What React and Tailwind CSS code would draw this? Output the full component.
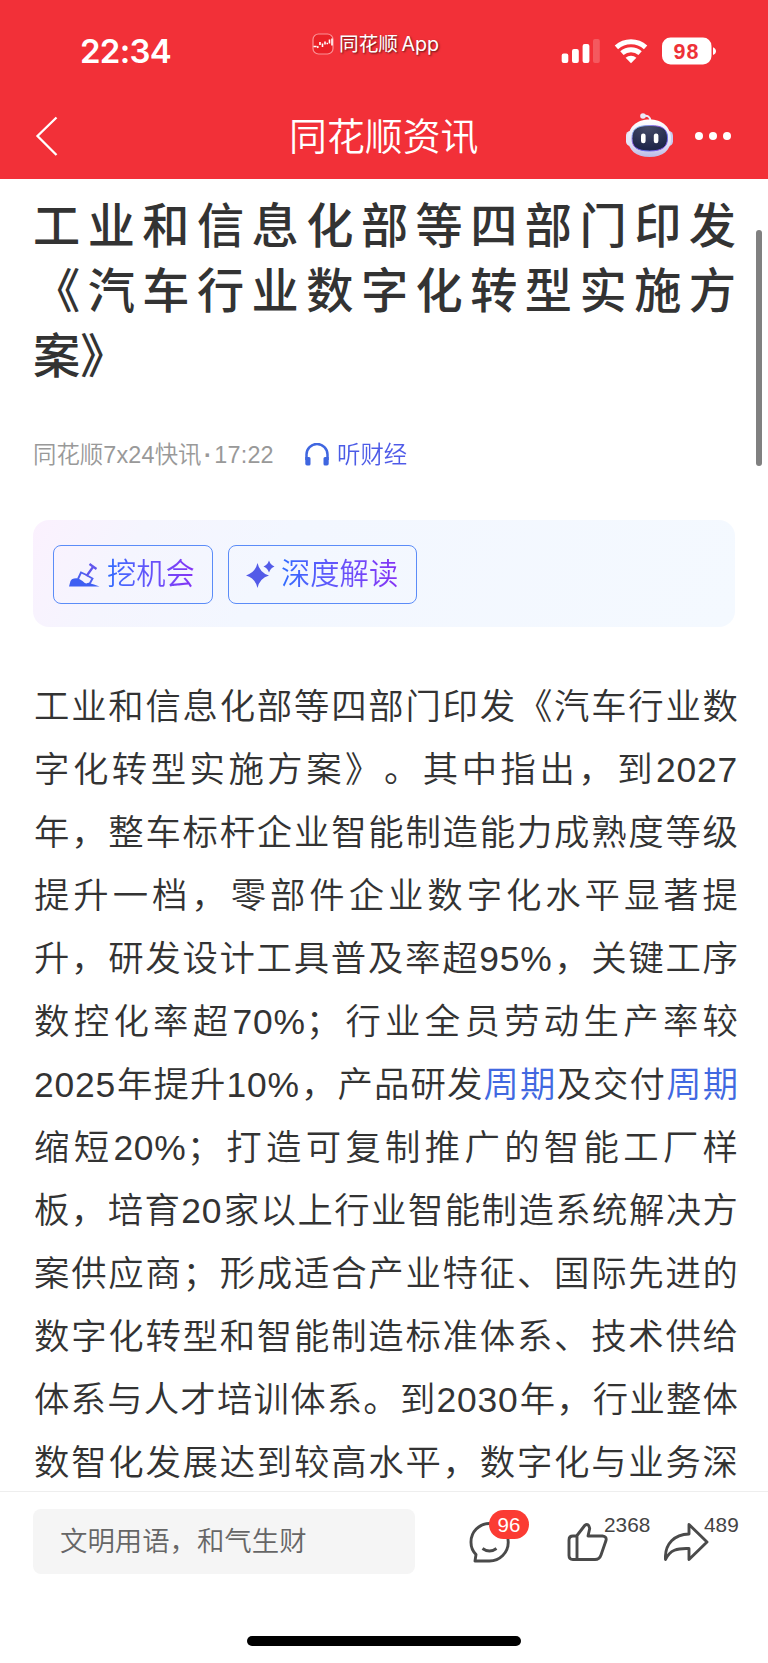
import React from "react";

const titleLines = ["工业和信息化部等四部门印发", "《汽车行业数字化转型实施方", "案》"];

const bodyLines = [
  "工业和信息化部等四部门印发《汽车行业数",
  "字化转型实施方案》。其中指出，到2027",
  "年，整车标杆企业智能制造能力成熟度等级",
  "提升一档，零部件企业数字化水平显著提",
  "升，研发设计工具普及率超95%，关键工序",
  "数控化率超70%；行业全员劳动生产率较",
  "2025年提升10%，产品研发周期及交付周期",
  "缩短20%；打造可复制推广的智能工厂样",
  "板，培育20家以上行业智能制造系统解决方",
  "案供应商；形成适合产业特征、国际先进的",
  "数字化转型和智能制造标准体系、技术供给",
  "体系与人才培训体系。到2030年，行业整体",
  "数智化发展达到较高水平，数字化与业务深",
];

// 关键词高亮，数字略加字距
function Line({ text }) {
  return text.split(/(周期|[0-9]+%?)/).map((part, i) => {
    if (part === "周期") return <span key={i} className="text-[#4169e1]">{part}</span>;
    if (/^[0-9]/.test(part)) return <span key={i} className="tracking-[0.8px]">{part}</span>;
    return part;
  });
}

function StatusBar() {
  return (
    <div className="flex h-[94px] items-start text-white">
      <div className="w-[312px] pl-[80px] pt-[31px] font-['Inter'] text-[33px] font-semibold leading-[40px] tracking-[-0.7px]">22:34</div>
      <div className="flex w-[249px] items-center pt-[31px] leading-[26px]">
        <svg width="22" height="22" viewBox="0 0 22 22" fill="none">
          <rect x="1" y="1" width="20" height="20" rx="5.5" fill="#ea2128" stroke="#fa9296" strokeWidth="1.2" />
          <path d="M1.5 13.5h3M5 14.5l1.5-1" stroke="#fff" strokeWidth="1.7" />
          <path d="M8 9v3M10.5 10.5v3.5M13 8.5v3M14.5 10.5h1.5M17.5 6.5v4M20 5.5v7" stroke="#fff" strokeWidth="1.6" />
        </svg>
        <span className="ml-[5px] text-[19.7px] [text-shadow:1px_1px_2px_rgba(0,0,0,0.6)]">同花顺 <span className="-ml-[2px] font-['Inter'] tracking-[-0.1px]">App</span></span>
      </div>
      <svg className="mt-[36px]" width="160" height="30" viewBox="561 36 160 30" fill="#fff">
        <rect x="561.7" y="53.5" width="6.6" height="9.5" rx="2" />
        <rect x="572" y="49" width="6.8" height="14" rx="2" />
        <rect x="582.6" y="44" width="6.8" height="19" rx="2" />
        <rect x="593" y="39" width="6.8" height="24" rx="2" opacity=".2" />
        <g fill="none" stroke="#fff" strokeWidth="5">
          <path d="M616.4 47.4a22 22 0 0 1 29.2 0" />
          <path d="M621.9 53.2a13.7 13.7 0 0 1 18.2 0" />
        </g>
        <path d="M625.6 57.8a8.2 8.2 0 0 1 10.8 0L631 63.2z" />
        <rect x="662" y="37.5" width="49.5" height="27" rx="8.5" />
        <path d="M713 47.3c4 1.5 4 6.3 0 7.8z" />
        <text x="686.5" y="58.7" fill="#ee3138" fontFamily="Liberation Sans" fontSize="21.5" fontWeight="700" textAnchor="middle" letterSpacing="1">98</text>
      </svg>
    </div>
  );
}

function Robot() {
  return (
    <svg width="48" height="46" viewBox="625 111 48 46">
      <defs>
        <linearGradient id="shell" x1="0" y1="0" x2="0" y2="1">
          <stop offset="0" stopColor="#fff" />
          <stop offset=".65" stopColor="#e4e2f5" />
          <stop offset="1" stopColor="#b9b9e6" />
        </linearGradient>
        <linearGradient id="rim" x1="0" y1="0" x2="1" y2="1">
          <stop offset="0" stopColor="#8be4f5" />
          <stop offset=".4" stopColor="#8a4fe0" />
          <stop offset=".7" stopColor="#5968ef" />
          <stop offset="1" stopColor="#a54fe8" />
        </linearGradient>
        <radialGradient id="face" cx=".45" cy=".1" r=".8">
          <stop offset="0" stopColor="#444a66" />
          <stop offset="1" stopColor="#1f264a" />
        </radialGradient>
      </defs>
      <path d="M643 115q7-1.5 7.5 5" fill="none" stroke="#eceaf8" strokeWidth="2" />
      <circle cx="643" cy="115" r="2.8" fill="#ebe9f8" />
      <rect x="626" y="130" width="9" height="15" rx="4.5" fill="#e6e6f8" />
      <rect x="664" y="130" width="9" height="15" rx="4.5" fill="#c9cbef" />
      <path d="M649.5 118.5C662 118.5 671 126 671 138c0 11-8 18-21.5 18S628 149 628 138c0-12 9-19.5 21.5-19.5z" fill="url(#shell)" />
      <path d="M649.5 124.5c14 0 18 4 18 13 0 8-5 12.5-18 12.5s-17.5-4.5-17.5-12.5c0-9 4-13 17.5-13z" fill="url(#face)" stroke="url(#rim)" strokeWidth="1" />
      <rect x="641" y="132.5" width="4.6" height="9.8" rx="2.2" fill="#fff" />
      <rect x="653.8" y="132.5" width="4.6" height="9.8" rx="2.2" fill="#fff" />
    </svg>
  );
}

function NavBar() {
  return (
    <div className="flex h-[85px] items-center">
      <svg className="-mt-[2px] ml-[35px] shrink-0" width="24" height="42" viewBox="0 0 24 42" fill="none" stroke="#fff" strokeWidth="2.3">
        <path d="M21.5 2.5 2.5 21 21.5 40" />
      </svg>
      <h1 className="ml-[230px] w-[336px] whitespace-nowrap text-[37.9px] font-[350] leading-[50px] text-white">同花顺资讯</h1>
      <div className="flex items-center gap-[22px] pb-[4px]">
        <Robot />
        <div className="mt-[2px] flex gap-[6px]">
          <i className="h-[8px] w-[8px] rounded-full bg-white" />
          <i className="h-[8px] w-[8px] rounded-full bg-white" />
          <i className="h-[8px] w-[8px] rounded-full bg-white" />
        </div>
      </div>
    </div>
  );
}

function Meta() {
  return (
    <div className="mt-[50px] flex h-[32px] items-center text-[23.4px] font-[350] leading-[32px]">
      <span className="w-[272px] whitespace-nowrap text-[#999]">
        同花顺<span className="tracking-[0.2px]">7x24</span>快讯<span className="px-[2.5px] font-bold">·</span><span className="tracking-[0.2px]">17:22</span>
      </span>
      <svg width="24" height="24" viewBox="0 0 24 24" fill="none">
        <path d="M1.5 17V11.5a10.5 10.5 0 0 1 21 0V17" stroke="#3f66e0" strokeWidth="2.5" />
        <path d="M.3 14H4q1.5 0 1.500 1.500v5.500q0 1.500-1.500 1.500H2q-1.700 0-1.700-1.700zM23.700 14H20q-1.500 0-1.500 1.500v5.500q0 1.500 1.500 1.500H22q1.700 0 1.700-1.700z" fill="#3f66e0" />
      </svg>
      <span className="ml-[8px] bg-gradient-to-r from-[#4a5be6] to-[#4f5ae8] bg-clip-text text-transparent">听财经</span>
    </div>
  );
}

function Actions() {
  return (
    <div className="mt-[49px] flex h-[107px] w-[702px] items-center gap-[15px] rounded-[16px] bg-[linear-gradient(120deg,#fbf1fe_0%,#f5f5fe_15%,#f3f7ff_35%,#f4f9ff_100%)] pl-[20px] pt-px">
      <button className="flex h-[59px] w-[160px] items-center rounded-[8px] border border-[#5b8cf8] pl-[15px]">
        <svg className="mt-[2px]" width="31" height="24" viewBox="0 0 31 24" fill="none">
          <path d="M9 16 12 9.5 16.5 11.5 23.5 15.500 20.500 21" stroke="#5060f0" strokeWidth="1.900" />
          <path d="m17.500 13 6.500-9M20.500 1l7 5" stroke="#6257ec" strokeWidth="2.200" />
          <path d="M0 23.500 1.500 18q1-2.500 3.500-2.500 2.500-.5 4.500 0l4 2.500q2.500 2.500 4 2.500 2-1.500 4 0l3.500 1 5.500 2z" fill="#3f5ff2" />
        </svg>
        <span className="ml-[7px] bg-gradient-to-r from-[#2c6bff] to-[#8430f5] bg-clip-text text-[29.3px] font-[350] leading-[40px] text-transparent">挖机会</span>
      </button>
      <button className="flex h-[59px] w-[189px] items-center rounded-[8px] border border-[#5b8cf8] pl-[17px]">
        <svg width="29" height="28" viewBox="0 0 29 28" fill="#535be8">
          <path d="M11.5 3q2.200 9.800 11.500 12.500-9.300 2.700-11.500 12.500Q9.300 18.200 0 15.500 9.300 12.800 11.500 3zM23 .5q1.500 4.500 5.500 6-4 1.500-5.500 6-1.500-4.500-5.500-6 4-1.500 5.500-6z" />
        </svg>
        <span className="ml-[6px] bg-gradient-to-r from-[#2c6bff] to-[#8430f5] bg-clip-text text-[29.3px] font-[350] leading-[40px] text-transparent">深度解读</span>
      </button>
    </div>
  );
}

function BottomBar() {
  return (
    <footer className="h-[172px] border-t border-[#eee] bg-white">
      <div className="flex pl-[33px] pt-[17px]">
        <div className="h-[65px] w-[382px] rounded-[8px] bg-[#f5f5f5] pl-[27px] text-[27.4px] font-[350] leading-[65px] text-[#666]">文明用语，和气生财</div>
        <div className="relative ml-[54px] mt-[11px] w-[98px]">
          <svg width="42" height="44" viewBox="0 0 42 44" fill="none" stroke="#4a4a4a" strokeWidth="2.9">
            <path d="M20.5 3.5A18.5 18.5 0 0 0 2 22.5Q2 29.5 7 34.5L6 41H20.5A18.7 18.7 0 0 0 20.5 3.5z" strokeLinejoin="round" />
            <path d="M13.5 28.5q7 5 14 0" />
          </svg>
          <span className="absolute -top-[10px] left-[20px] h-[29px] w-[40px] rounded-full bg-[#fb3b33] text-center text-[20.5px] leading-[29px] text-white">96</span>
        </div>
        <div className="relative mt-[12px] w-[97px]">
          <svg width="44" height="42" viewBox="567 1521 44 42" fill="none" stroke="#4a4a4a" strokeWidth="2.9" strokeLinejoin="round">
            <path d="M577 1536h-4q-4 0-4 4v15.5q0 4 4 4H595q4.500 0 6-4.500l5-14.500q1-4-3.500-4.500h-14.500l1.700-7.500q-1.200-6-5-3L577 1535.500V1559.500" />
          </svg>
          <span className="absolute -top-[10px] left-[37px] text-[20.8px] leading-[28px] text-[#444]">2368</span>
        </div>
        <div className="relative mt-[12px] w-[74px]">
          <svg width="46" height="42" viewBox="664 1521 46 42" fill="none" stroke="#4a4a4a" strokeWidth="2.9" strokeLinejoin="round">
            <path d="M689 1524.5 707 1542 689 1559.5V1548.5C677 1548 670 1550 665.5 1559.5 664.5 1543 675 1534.5 689 1534z" />
          </svg>
          <span className="absolute -top-[10px] left-[40px] text-[20.8px] leading-[28px] text-[#444]">489</span>
        </div>
      </div>
      <div className="mx-auto mt-[62px] h-[10px] w-[274px] rounded-full bg-black" />
    </footer>
  );
}

export default function App() {
  return (
    <main className="relative flex h-[1663px] w-[768px] flex-col overflow-hidden bg-white font-['Liberation_Sans','Noto_Sans_CJK_SC',sans-serif]">
      <header className="h-[179px] shrink-0 bg-[#f23038]">
        <StatusBar />
        <NavBar />
      </header>
      <article className="h-[1312px] shrink-0 overflow-hidden pl-[33px] pt-[15px]">
        <h2 className="w-[703px] text-[47.2px] font-medium leading-[65px] text-[#333] [text-spacing-trim:space-all]">
          {titleLines.map((line, i) => (
            <div key={i} className={i < 2 ? "whitespace-nowrap [text-align-last:justify]" : "whitespace-nowrap"}>{line}</div>
          ))}
        </h2>
        <Meta />
        <Actions />
        <div className="ml-px mt-[49px] w-[704px] text-[35.4px] font-[350] leading-[63px] text-[#333] [text-spacing-trim:space-all]">
          {bodyLines.map((line, i) => (
            <p key={i} className="whitespace-nowrap [text-align-last:justify]">
              <Line text={line} />
            </p>
          ))}
        </div>
      </article>
      <BottomBar />
      {/* 滚动条 */}
      <div className="absolute right-[6px] top-[230px] h-[236px] w-[6px] rounded-full bg-[#808080]" />
    </main>
  );
}
